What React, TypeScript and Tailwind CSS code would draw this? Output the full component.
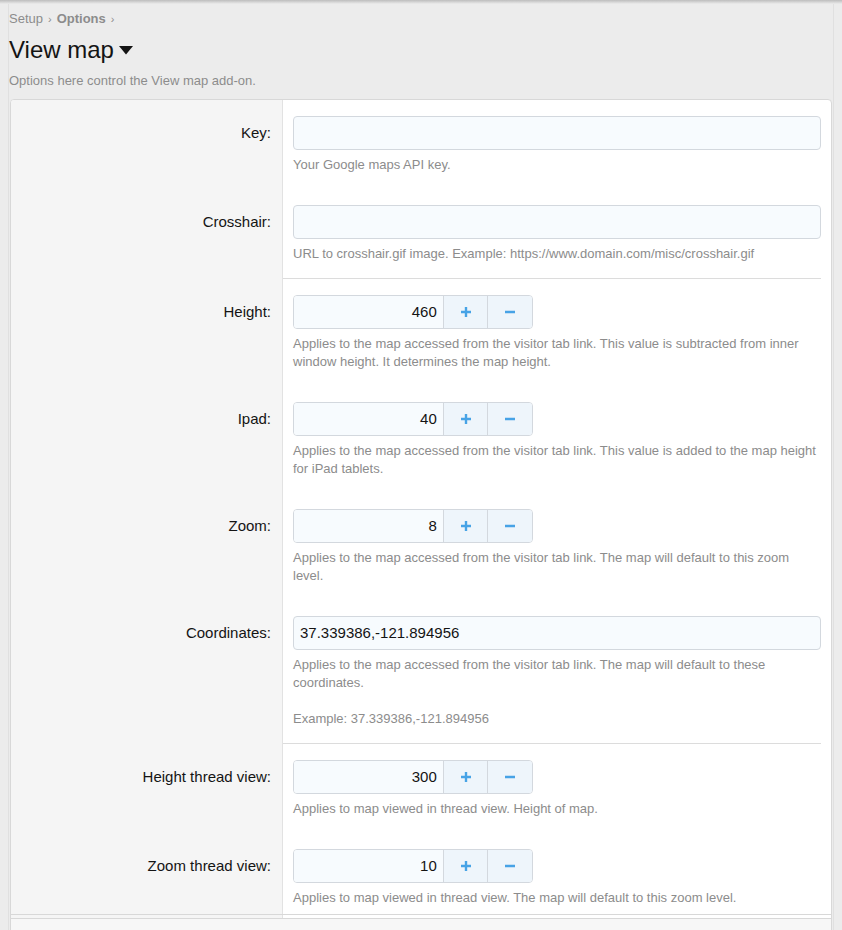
import React from 'react';

const font = { fontFamily: '"Liberation Sans", Arial, Helvetica, sans-serif' };

type Row =
  | { kind: 'text'; label: string; value?: string; hint: React.ReactNode; divider?: boolean }
  | { kind: 'spin'; label: string; value: string; hint: React.ReactNode; divider?: boolean };

const rows: Row[] = [
  { kind: 'text', label: 'Key:', hint: 'Your Google maps API key.' },
  {
    kind: 'text',
    label: 'Crosshair:',
    hint: 'URL to crosshair.gif image. Example: https://www.domain.com/misc/crosshair.gif',
    divider: true,
  },
  {
    kind: 'spin',
    label: 'Height:',
    value: '460',
    hint: 'Applies to the map accessed from the visitor tab link. This value is subtracted from inner window height. It determines the map height.',
  },
  {
    kind: 'spin',
    label: 'Ipad:',
    value: '40',
    hint: 'Applies to the map accessed from the visitor tab link. This value is added to the map height for iPad tablets.',
  },
  {
    kind: 'spin',
    label: 'Zoom:',
    value: '8',
    hint: 'Applies to the map accessed from the visitor tab link. The map will default to this zoom level.',
  },
  {
    kind: 'text',
    label: 'Coordinates:',
    value: '37.339386,-121.894956',
    hint: (
      <>
        Applies to the map accessed from the visitor tab link. The map will default to these coordinates.
        <br />
        <br />
        Example: 37.339386,-121.894956
      </>
    ),
    divider: true,
  },
  {
    kind: 'spin',
    label: 'Height thread view:',
    value: '300',
    hint: 'Applies to map viewed in thread view. Height of map.',
  },
  {
    kind: 'spin',
    label: 'Zoom thread view:',
    value: '10',
    hint: 'Applies to map viewed in thread view. The map will default to this zoom level.',
  },
];

function Spinner({ value }: { value: string }) {
  return (
    <div className="flex h-[34px] w-[240px] overflow-hidden rounded-[4px] border border-[#d3d8de]">
      <div className="flex w-[150px] items-center justify-end bg-[#f7fbfe] pr-[6px] text-[15px] text-[#141414]">
        {value}
      </div>
      <button className="flex w-[45px] items-center justify-center border-l border-[#d3d8de] bg-[#eef5fb]">
        <svg width="12" height="12" viewBox="0 0 12 12">
          <path d="M6 1v10M1 6h10" stroke="#47a3e6" strokeWidth="2.4" />
        </svg>
      </button>
      <button className="flex w-[45px] items-center justify-center border-l border-[#d3d8de] bg-[#eef5fb]">
        <svg width="12" height="12" viewBox="0 0 12 12">
          <path d="M1 6h10" stroke="#47a3e6" strokeWidth="2.4" />
        </svg>
      </button>
    </div>
  );
}

export default function App() {
  return (
    <div className="min-h-[930px] bg-[#ececec] relative" style={font}>
      {/* top shade */}
      <div className="absolute left-0 right-0 top-0 h-[4px] bg-gradient-to-b from-[#bdbdbd] to-[#ececec]" />

      <div className="mx-[8px] border-x border-[#e0e0e0] pt-[11px] min-h-[930px]">
        {/* Breadcrumb */}
        <div className="flex items-center text-[13px] text-[#8c8c8c] leading-[16px]">
          <span>Setup</span>
          <span className="mx-[5px] text-[11px]">›</span>
          <span className="font-bold">Options</span>
          <span className="mx-[5px] text-[11px]">›</span>
        </div>

        {/* Title */}
        <h1 className="mt-[8px] flex items-center text-[24px] leading-[30px] text-[#141414]">
          View map
          <svg className="ml-[5px]" width="14" height="9" viewBox="0 0 14 9">
            <path d="M0 0h14L7 8.5z" fill="#141414" />
          </svg>
        </h1>
        <p className="mt-[8px] text-[13px] leading-[16px] text-[#8c8c8c]">
          Options here control the View map add-on.
        </p>

        {/* Panel */}
        <div className="mt-[10px] ml-[1px] mr-[1px] overflow-hidden rounded-t-[4px] border border-[#d8d8d8] bg-white">
          {rows.map((r, i) => (
            <div key={i}>
              <div className="flex">
                <div className="w-[272px] shrink-0 border-r border-[#e2e2e2] bg-[#f5f5f5] pr-[11px] pt-[16px] text-right">
                  <div className="flex h-[34px] items-center justify-end text-[15px] text-[#141414]">{r.label}</div>
                </div>
                <div
                  className={
                    i === rows.length - 1
                      ? 'flex-1 pl-[10px] pr-[10px] pt-[16px] pb-[7px]'
                      : 'flex-1 pl-[10px] pr-[10px] pt-[16px] pb-[15px]'
                  }
                >
                  {r.kind === 'spin' ? (
                    <Spinner value={r.value} />
                  ) : (
                    <div className="flex h-[34px] items-center rounded-[4px] border border-[#d3d8de] bg-[#f7fbfe] px-[6px] text-[15px] text-[#141414]">
                      {r.value}
                    </div>
                  )}
                  <div className="mt-[6px] text-[13px] leading-[18px] text-[#8c8c8c]">{r.hint}</div>
                </div>
              </div>
              {r.divider && (
                <div className="flex">
                  <div className="w-[272px] shrink-0 border-r border-[#e2e2e2] bg-[#f5f5f5]" />
                  <div className="flex-1 pr-[10px]">
                    <div className="h-px bg-[#dcdcdc]" />
                  </div>
                </div>
              )}
            </div>
          ))}
          <div className="border-t border-[#d8d8d8] flex">
            <div className="w-[272px] shrink-0 border-r border-[#e2e2e2] bg-[#f5f5f5] h-[3px]" />
          </div>
          <div className="border-t border-[#d8d8d8] h-[20px] bg-[#f7f7f7]" />
        </div>
      </div>
    </div>
  );
}
